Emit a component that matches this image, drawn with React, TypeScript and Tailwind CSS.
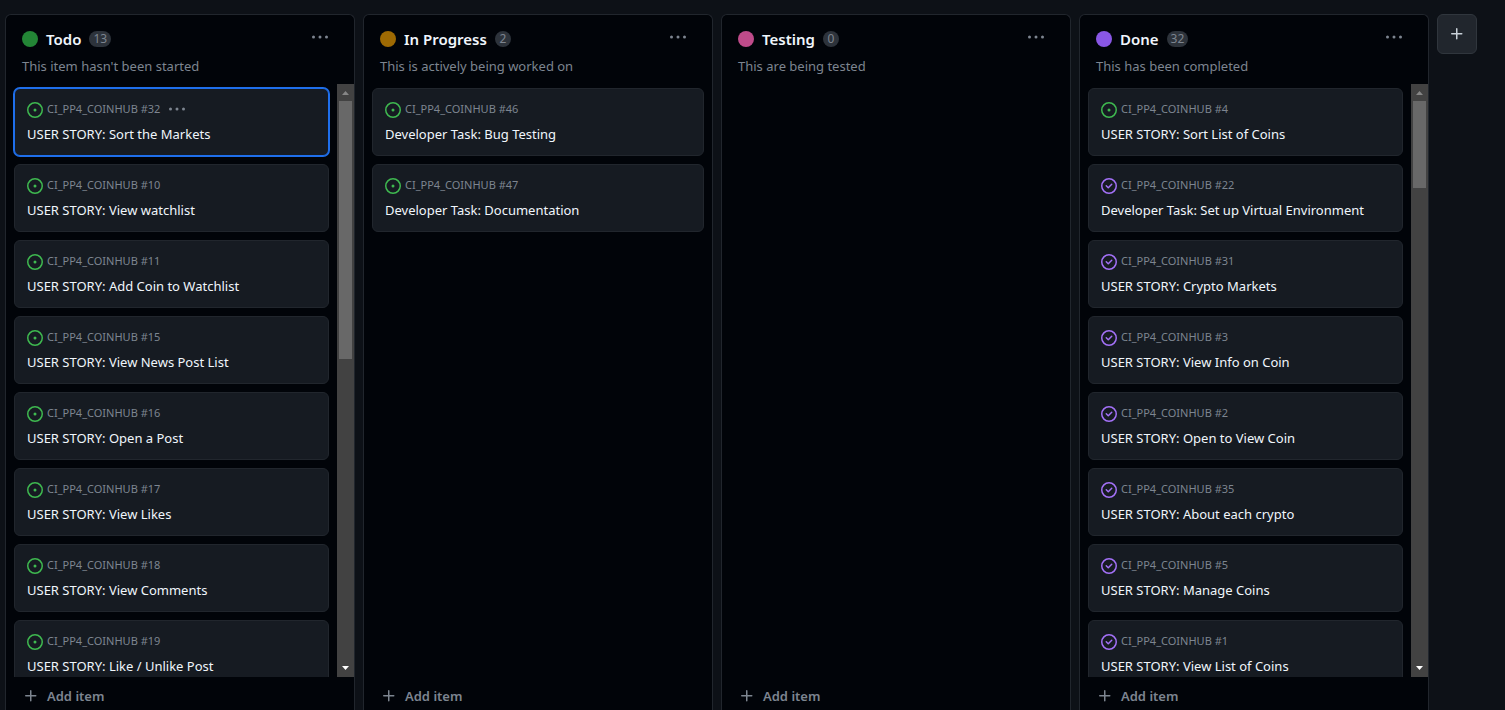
import React from "react";

type Item = { id: number; title: string; closed?: boolean; selected?: boolean };
type ColumnData = {
  name: string;
  count: number;
  description: string;
  dot: string;
  items: Item[];
  thumb?: number;
};

const columns: ColumnData[] = [
  {
    name: "Todo",
    count: 13,
    description: "This item hasn't been started",
    dot: "bg-[#238636]",
    thumb: 46.2,
    items: [
      { id: 32, title: "USER STORY: Sort the Markets", selected: true },
      { id: 10, title: "USER STORY: View watchlist" },
      { id: 11, title: "USER STORY: Add Coin to Watchlist" },
      { id: 15, title: "USER STORY: View News Post List" },
      { id: 16, title: "USER STORY: Open a Post" },
      { id: 17, title: "USER STORY: View Likes" },
      { id: 18, title: "USER STORY: View Comments" },
      { id: 19, title: "USER STORY: Like / Unlike Post" },
    ],
  },
  {
    name: "In Progress",
    count: 2,
    description: "This is actively being worked on",
    dot: "bg-[#9e6a03]",
    items: [
      { id: 46, title: "Developer Task: Bug Testing" },
      { id: 47, title: "Developer Task: Documentation" },
    ],
  },
  {
    name: "Testing",
    count: 0,
    description: "This are being tested",
    dot: "bg-[#bf4b8a]",
    items: [],
  },
  {
    name: "Done",
    count: 32,
    description: "This has been completed",
    dot: "bg-[#8957e5]",
    thumb: 15.6,
    items: [
      { id: 4, title: "USER STORY: Sort List of Coins" },
      { id: 22, title: "Developer Task: Set up Virtual Environment", closed: true },
      { id: 31, title: "USER STORY: Crypto Markets", closed: true },
      { id: 3, title: "USER STORY: View Info on Coin", closed: true },
      { id: 2, title: "USER STORY: Open to View Coin", closed: true },
      { id: 35, title: "USER STORY: About each crypto", closed: true },
      { id: 5, title: "USER STORY: Manage Coins", closed: true },
      { id: 1, title: "USER STORY: View List of Coins", closed: true },
    ],
  },
];

function OpenIcon() {
  return (
    <svg viewBox="0 0 16 16" className="size-4 shrink-0 fill-[#3fb950]" aria-hidden="true">
      <path d="M8 9.5a1.5 1.5 0 1 0 0-3 1.5 1.5 0 0 0 0 3Z" />
      <path d="M8 0a8 8 0 1 1 0 16A8 8 0 0 1 8 0ZM1.5 8a6.5 6.5 0 1 0 13 0 6.5 6.5 0 0 0-13 0Z" />
    </svg>
  );
}

function ClosedIcon() {
  return (
    <svg viewBox="0 0 16 16" className="size-4 shrink-0 fill-[#a371f7]" aria-hidden="true">
      <path d="M11.28 6.78a.75.75 0 0 0-1.06-1.06L7.25 8.69 5.78 7.22a.75.75 0 0 0-1.06 1.06l2 2a.75.75 0 0 0 1.06 0l3.5-3.5Z" />
      <path d="M16 8A8 8 0 1 1 0 8a8 8 0 0 1 16 0Zm-1.5 0a6.5 6.5 0 1 0-13 0 6.5 6.5 0 0 0 13 0Z" />
    </svg>
  );
}

function KebabIcon() {
  return (
    <svg viewBox="0 0 18 4" className="h-1 w-[18px] fill-[#7d8590]" aria-hidden="true">
      <circle cx="2.5" cy="2" r="1.5" />
      <circle cx="9" cy="2" r="1.5" />
      <circle cx="15.5" cy="2" r="1.5" />
    </svg>
  );
}

function PlusIcon() {
  return (
    <svg viewBox="0 0 16 16" className="size-4 shrink-0 fill-current" aria-hidden="true">
      <path d="M7.75 2a.75.75 0 0 1 .75.75V7h4.25a.75.75 0 0 1 0 1.5H8.5v4.25a.75.75 0 0 1-1.5 0V8.5H2.75a.75.75 0 0 1 0-1.5H7V2.75A.75.75 0 0 1 7.75 2Z" />
    </svg>
  );
}

function Scrollbar({ thumb }: { thumb: number }) {
  return (
    <div className="flex w-[17px] shrink-0 flex-col bg-[#424242]" aria-hidden="true">
      <svg viewBox="0 0 17 17" className="size-[17px] shrink-0 fill-[#868686]">
        <path d="M5 11 8.5 7 12 11Z" />
      </svg>
      <div className="min-h-0 flex-1 px-0.5">
        <div className="bg-[#686868]" style={{ height: `${thumb}%` }} />
      </div>
      <svg viewBox="0 0 17 17" className="size-[17px] shrink-0 fill-white">
        <path d="M5 6 8.5 10 12 6Z" />
      </svg>
    </div>
  );
}

function Card({ item }: { item: Item }) {
  return (
    <li
      className={
        item.selected
          ? "h-[68px] shrink-0 rounded-md border border-[#1f6feb] bg-[#161b22] px-3 py-2.5 ring-1 ring-[#1f6feb]"
          : "h-[68px] shrink-0 rounded-md border border-[#21262d] bg-[#161b22] px-3 py-2.5"
      }
    >
      <div className="flex h-[22px] items-center gap-1">
        {item.closed ? <ClosedIcon /> : <OpenIcon />}
        <span className="self-start text-[11px] leading-5 text-[#7d8590]">CI_PP4_COINHUB #{item.id}</span>
        {item.selected && (
          <button type="button" aria-label="Item actions" className="ml-1 flex h-5 items-center self-start">
            <KebabIcon />
          </button>
        )}
      </div>
      <a href="#" className="mt-[3px] block truncate text-[13px] leading-5 text-[#f0f6fc]">
        {item.title}
      </a>
    </li>
  );
}

function Column({ column }: { column: ColumnData }) {
  return (
    <section className="flex w-[350px] shrink-0 flex-col rounded-t-md border border-b-0 border-[#21262d] bg-[#010409]">
      <header className="px-4 pt-3 pb-[7px]">
        <div className="flex h-6 items-center gap-2">
          <span className={`size-4 rounded-full ${column.dot}`} />
          <h2 className="text-[15px] leading-6 font-semibold text-[#f0f6fc]">{column.name}</h2>
          <span className="flex h-4 min-w-4 items-center justify-center rounded-full bg-[#2d333b] px-1 text-[12px] leading-4 text-[#7d8590]">
            {column.count}
          </span>
          <button
            type="button"
            aria-label={`Actions for ${column.name}`}
            className="ml-auto flex h-5 w-9 items-center justify-center self-start"
          >
            <KebabIcon />
          </button>
        </div>
        <p className="mt-1 text-[13px] leading-[22px] text-[#7d8590]">{column.description}</p>
      </header>
      <div className="flex min-h-0 flex-1">
        <ul className="flex min-w-0 flex-1 flex-col gap-2 overflow-hidden px-2 pt-1">
          {column.items.map((item) => (
            <Card key={item.id} item={item} />
          ))}
        </ul>
        {column.thumb !== undefined && <Scrollbar thumb={column.thumb} />}
      </div>
      <button
        type="button"
        className="flex h-[33px] shrink-0 items-center gap-2 px-[17px] pt-1 text-[13px] leading-5 font-semibold text-[#7d8590]"
      >
        <PlusIcon />
        Add item
      </button>
    </section>
  );
}

export default function App() {
  return (
    <main className="flex h-screen gap-2 overflow-hidden bg-[#0d1117] pt-3.5 pl-[5px] font-['Noto_Sans','Open_Sans',sans-serif]">
      {columns.map((column) => (
        <Column key={column.name} column={column} />
      ))}
      <button
        type="button"
        aria-label="Add a new column"
        className="flex size-10 shrink-0 items-center justify-center rounded-md border border-[#30363d] bg-[#21262d] text-[#c9d1d9]"
      >
        <PlusIcon />
      </button>
    </main>
  );
}
